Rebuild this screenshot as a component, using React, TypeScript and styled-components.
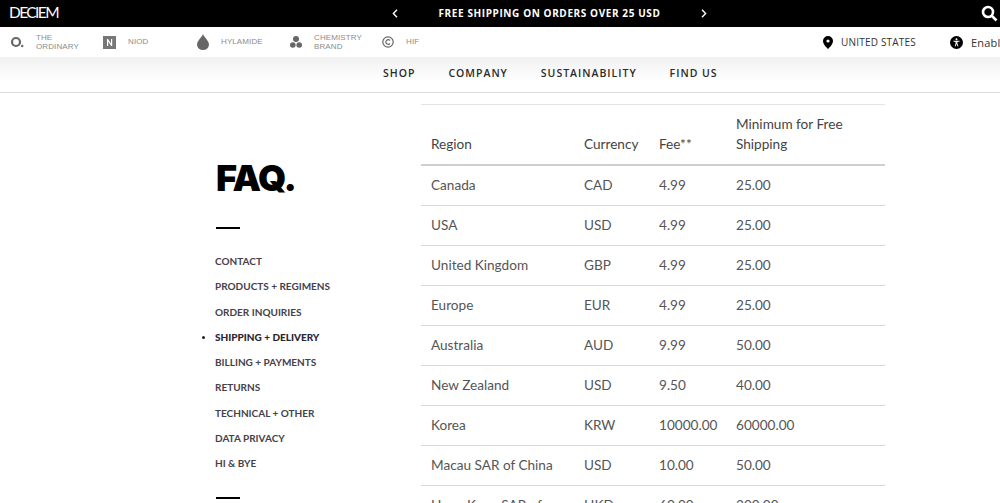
import React from "react";
import styled, { createGlobalStyle } from "styled-components";

const Global = createGlobalStyle`
  html, body { margin: 0; padding: 0; background: #fff; }
  body { width: 1000px; height: 503px; overflow: hidden; font-family: "Lato", "Liberation Sans", sans-serif; }
  * { box-sizing: border-box; }
`;

const Page = styled.div`
  width: 1000px;
  height: 503px;
  overflow: hidden;
  display: flex;
  flex-direction: column;
`;

const TopBar = styled.div`
  height: 27px;
  flex: none;
  background: #000;
  color: #fff;
  display: grid;
  grid-template-columns: 381px 10px 299px 10px 270px 21px;
  align-items: center;
  padding-left: 9px;
`;

const Logo = styled.div`
  font-family: "Lato", sans-serif;
  font-size: 15.5px;
  font-weight: 400;
  letter-spacing: -1.6px;
  line-height: 27px;
  margin-top: -3px;
`;

const Promo = styled.div`
  text-align: center;
  font-family: "Open Sans", sans-serif;
  font-size: 10px;
  font-weight: 700;
  letter-spacing: 0.6px;
  margin-top: -1px;
`;

const IconSlot = styled.span`
  display: flex;
  align-items: center;
  justify-content: center;
`;

const BrandRow = styled.div`
  height: 30px;
  flex: none;
  background: #fff;
  display: flex;
  align-items: center;
  white-space: nowrap;
`;

const Brand = styled.div<{ $w: number; $gap: number; $left: number }>`
  width: ${(p) => p.$w}px;
  flex: none;
  padding-left: ${(p) => p.$left}px;
  display: flex;
  align-items: center;
  gap: ${(p) => p.$gap}px;
  font-family: "Liberation Sans", Arial, sans-serif;
  font-size: 8px;
  line-height: 9.5px;
  color: #8c8c8c;
  letter-spacing: 0.1px;
`;

const RightGroup = styled.div`
  margin-left: auto;
  display: flex;
  align-items: center;
  font-family: "Open Sans", sans-serif;
  font-size: 10px;
  letter-spacing: 0.2px;
  color: #333;
  width: 178px;
  flex: none;
`;

const Region = styled.div`
  display: flex;
  align-items: center;
  gap: 8px;
  width: 128px;
  padding-left: 1px;
  flex: none;
`;

const Access = styled.div`
  display: flex;
  align-items: center;
  gap: 8px;
  font-size: 11px;
  flex: none;
`;

const Nav = styled.nav`
  height: 36px;
  flex: none;
  background: linear-gradient(#f1f1f1, #fff 70%);
  border-bottom: 1px solid #dcdcdc;
  display: flex;
  gap: 33px;
  padding-left: 383px;
  padding-top: 9px;
  font-family: "Open Sans", sans-serif;
  font-weight: 600;
  font-size: 10.5px;
  letter-spacing: 1px;
  color: #2a2a2a;
`;

const Main = styled.main`
  display: flex;
  flex: 1;
  min-height: 0;
  padding-left: 202px;
`;

const Sidebar = styled.aside`
  width: 219px;
  flex: none;
  padding-top: 66px;
`;

const Title = styled.h1`
  margin: 0 0 0 14px;
  font-family: "Inter", sans-serif;
  font-weight: 900;
  font-size: 36px;
  line-height: 38px;
  letter-spacing: -1.3px;
  color: #000;
`;

const Rule = styled.div`
  width: 24px;
  height: 2px;
  background: #000;
  margin-left: 14px;
`;

const TitleRule = styled(Rule)`
  margin-top: 30px;
`;

const Menu = styled.ul`
  list-style: none;
  margin: 20px 0 20px;
  padding: 0;
`;

const MenuItem = styled.li<{ $active?: boolean }>`
  position: relative;
  height: 25.3px;
  line-height: 25.3px;
  padding-left: 13px;
  font-size: 10px;
  font-weight: ${(p) => (p.$active ? 900 : 700)};
  color: ${(p) => (p.$active ? "#2b2630" : "#45414a")};
  &::before {
    content: ${(p) => (p.$active ? '""' : "none")};
    position: absolute;
    left: 0;
    top: 11px;
    width: 3px;
    height: 3px;
    border-radius: 50%;
    background: #222;
  }
`;

const TableWrap = styled.div`
  padding-top: 11px;
  width: 464px;
  flex: none;
`;

const Table = styled.table`
  width: 464px;
  border-collapse: collapse;
  table-layout: fixed;
  border-top: 1px solid #e4e4e4;
  font-family: "Lato", sans-serif;
  font-size: 13.6px;
  color: #555;
`;

const HeadCell = styled.th`
  height: 60px;
  padding: 8px 10px 10px 10px;
  vertical-align: bottom;
  text-align: left;
  font-weight: 400;
  line-height: 20px;
  color: #444;
  border-bottom: 2px solid #cfcfcf;
`;

const Cell = styled.td`
  padding: 9px 10px 10px;
  border-bottom: 1px solid #d9d9d9;
  vertical-align: top;
  line-height: 20px;
`;

const rows = [
  ["Canada", "CAD", "4.99", "25.00"],
  ["USA", "USD", "4.99", "25.00"],
  ["United Kingdom", "GBP", "4.99", "25.00"],
  ["Europe", "EUR", "4.99", "25.00"],
  ["Australia", "AUD", "9.99", "50.00"],
  ["New Zealand", "USD", "9.50", "40.00"],
  ["Korea", "KRW", "10000.00", "60000.00"],
  ["Macau SAR of China", "USD", "10.00", "50.00"],
  ["Hong Kong SAR of China", "HKD", "60.00", "300.00"],
];

const links = [
  "CONTACT",
  "PRODUCTS + REGIMENS",
  "ORDER INQUIRIES",
  "SHIPPING + DELIVERY",
  "BILLING + PAYMENTS",
  "RETURNS",
  "TECHNICAL + OTHER",
  "DATA PRIVACY",
  "HI & BYE",
];

const Chevron = ({ dir }: { dir: "l" | "r" }) => (
  <svg width="6" height="9" viewBox="0 0 6 9" fill="none" stroke="#fff" strokeWidth="1.4">
    <path d={dir === "l" ? "M5 .8 1.4 4.500 5 8.200" : "M1 .8 4.600 4.500 1 8.200"} />
  </svg>
);

export default function App() {
  return (
    <Page>
      <Global />
      <TopBar>
        <Logo>DECIEM</Logo>
        <IconSlot><Chevron dir="l" /></IconSlot>
        <Promo>FREE SHIPPING ON ORDERS OVER 25 USD</Promo>
        <IconSlot><Chevron dir="r" /></IconSlot>
        <span />
        <IconSlot>
          <svg width="17" height="17" viewBox="0 0 17 17" fill="none" stroke="#fff" strokeWidth="2.6">
            <circle cx="7" cy="7" r="5" />
            <path d="m10.500 10.500 5 5" />
          </svg>
        </IconSlot>
      </TopBar>
      <BrandRow>
        <Brand $w={103} $gap={12} $left={10}>
          <svg width="14" height="12" viewBox="0 0 14 12">
            <circle cx="6" cy="6" r="4" fill="none" stroke="#666" strokeWidth="2.2" />
            <circle cx="12.200" cy="10" r="1.200" fill="#666" />
          </svg>
          <span>THE<br />ORDINARY</span>
        </Brand>
        <Brand $w={93} $gap={12} $left={0}>
          <svg width="13" height="13" viewBox="0 0 13 13">
            <rect width="13" height="13" fill="#777" />
            <path d="M4 10V3h1l3 4.600V3h1.200v7h-1L5.200 5.400V10z" fill="#fff" />
          </svg>
          <span>NIOD</span>
        </Brand>
        <Brand $w={93} $gap={12} $left={1}>
          <svg width="12" height="16" viewBox="0 0 12 16">
            <path d="M6 0C5 3 0 7 0 10.500A6 5.500 0 0 0 12 10.500C12 7 7 3 6 0Z" fill="#666" />
          </svg>
          <span>HYLAMIDE</span>
        </Brand>
        <Brand $w={93} $gap={12} $left={1}>
          <svg width="12" height="12" viewBox="0 0 12 12" fill="#666">
            <circle cx="6" cy="3" r="3" />
            <circle cx="2.800" cy="9" r="2.800" />
            <circle cx="9.200" cy="9" r="2.800" />
          </svg>
          <span>CHEMISTRY<br />BRAND</span>
        </Brand>
        <Brand $w={60} $gap={12} $left={0}>
          <svg width="12" height="12" viewBox="0 0 12 12" fill="none" stroke="#666">
            <circle cx="6" cy="6" r="5.200" strokeWidth="1.200" />
            <path d="M7.900 4.500A2.300 2.300 0 1 0 7.900 7.500" strokeWidth="1.200" />
          </svg>
          <span>HIF</span>
        </Brand>
        <RightGroup>
          <Region>
            <svg width="10" height="13" viewBox="0 0 10 13">
              <path fillRule="evenodd" d="M5 0a5 5 0 0 1 5 5c0 3-3 6-5 8-2-2-5-5-5-8a5 5 0 0 1 5-5Zm0 3.400a1.600 1.600 0 1 0 0 3.200 1.600 1.600 0 0 0 0-3.200Z" fill="#000" />
            </svg>
            <span>UNITED STATES</span>
          </Region>
          <Access>
            <svg width="13" height="13" viewBox="0 0 13 13">
              <circle cx="6.500" cy="6.500" r="6.500" fill="#000" />
              <circle cx="6.500" cy="3.200" r="1" fill="#fff" />
              <path d="M3.400 4.700h6.200v.9L7.400 6v1.600l1 2.700-.8.300-1.100-2.500-1.100 2.500-.8-.3 1-2.700V6L3.400 5.600z" fill="#fff" />
            </svg>
            <span>Enable</span>
          </Access>
        </RightGroup>
      </BrandRow>
      <Nav>
        <span>SHOP</span>
        <span>COMPANY</span>
        <span>SUSTAINABILITY</span>
        <span>FIND US</span>
      </Nav>
      <Main>
        <Sidebar>
          <Title>FAQ.</Title>
          <TitleRule />
          <Menu>
            {links.map((l) => (
              <MenuItem key={l} $active={l === "SHIPPING + DELIVERY"}>{l}</MenuItem>
            ))}
          </Menu>
          <Rule />
        </Sidebar>
        <TableWrap>
          <Table>
            <colgroup>
              <col style={{ width: 153 }} />
              <col style={{ width: 75 }} />
              <col style={{ width: 77 }} />
              <col />
            </colgroup>
            <thead>
              <tr>
                <HeadCell>Region</HeadCell>
                <HeadCell>Currency</HeadCell>
                <HeadCell>Fee**</HeadCell>
                <HeadCell>Minimum for Free Shipping</HeadCell>
              </tr>
            </thead>
            <tbody>
              {rows.map((r) => (
                <tr key={r[0]}>
                  {r.map((v) => (
                    <Cell key={v}>{v}</Cell>
                  ))}
                </tr>
              ))}
            </tbody>
          </Table>
        </TableWrap>
      </Main>
    </Page>
  );
}
